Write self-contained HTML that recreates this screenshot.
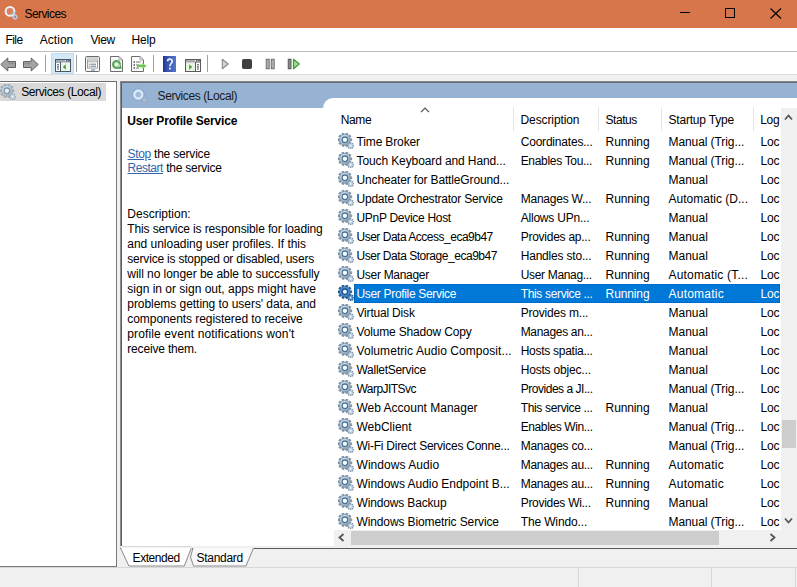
<!DOCTYPE html>
<html><head><meta charset="utf-8"><style>
html,body{margin:0;padding:0;}
body{width:797px;height:587px;position:relative;overflow:hidden;background:#f0f0f0;font-family:"Liberation Sans",sans-serif;}
.t{position:absolute;white-space:nowrap;line-height:20px;}
.b{position:absolute;}
svg{display:block;}
</style></head><body>
<svg width="0" height="0" style="position:absolute;left:0;top:0"><defs><radialGradient id="gg" cx="0.42" cy="0.38" r="0.62"><stop offset="0" stop-color="#eef8fe"/><stop offset="0.55" stop-color="#bcd6ea"/><stop offset="1" stop-color="#8eaac2"/></radialGradient></defs></svg>
<div class="b" style="left:0px;top:0px;width:797px;height:28px;background:#d7764a"></div>
<svg class="b" style="left:2px;top:3px" width="20" height="20" viewBox="0 0 20 20">
<circle cx="8" cy="8.4" r="4.4" fill="#d98262" stroke="#e9f0f8" stroke-width="2"/>
<path d="M10.5 11.5 A4.4 4.4 0 0 0 12.2 9" fill="none" stroke="#a9cde0" stroke-width="2"/>
<circle cx="13" cy="14" r="2.1" fill="#7f9bbf" stroke="#dce6f0" stroke-width="1"/>
</svg>
<div class="t" style="left:24.50px;top:4.44px;font-size:12px;color:#000;letter-spacing:-0.577px;">Services</div>
<div class="b" style="left:680px;top:12px;width:10px;height:1px;background:#000"></div>
<div class="b" style="left:725px;top:8px;width:10px;height:10px;border:1px solid #000;box-sizing:border-box"></div>
<svg class="b" style="left:770px;top:8px" width="12" height="11" viewBox="0 0 12 11"><path d="M0.5 0.5 L11 10.5 M11 0.5 L0.5 10.5" stroke="#000" stroke-width="1.1" fill="none"/></svg>
<div class="b" style="left:0px;top:28px;width:797px;height:23px;background:#fff"></div>
<div class="b" style="left:0px;top:51px;width:797px;height:1px;background:#bdbdbd"></div>
<div class="t" style="left:5.60px;top:29.84px;font-size:12px;color:#000;letter-spacing:-0.609px;">File</div>
<div class="t" style="left:39.80px;top:29.84px;font-size:12px;color:#000;letter-spacing:0.025px;">Action</div>
<div class="t" style="left:90.40px;top:29.84px;font-size:12px;color:#000;letter-spacing:-0.324px;">View</div>
<div class="t" style="left:131.50px;top:29.84px;font-size:12px;color:#000;letter-spacing:-0.145px;">Help</div>
<div class="b" style="left:0px;top:52px;width:797px;height:22px;background:#fff"></div>
<div class="b" style="left:0px;top:74px;width:797px;height:7px;background:#f0f0f0"></div>
<div class="b" style="left:0px;top:74px;width:797px;height:1px;background:#dcdcdc"></div>
<div class="b" style="left:45px;top:55px;width:1px;height:17px;background:#a0a0a0"></div>
<div class="b" style="left:76px;top:55px;width:1px;height:17px;background:#a0a0a0"></div>
<div class="b" style="left:153px;top:55px;width:1px;height:17px;background:#a0a0a0"></div>
<div class="b" style="left:207px;top:55px;width:1px;height:17px;background:#a0a0a0"></div>
<svg class="b" style="left:0px;top:57px" width="40" height="15" viewBox="0 0 40 15">
<path d="M0.8 7.5 L7.8 1 L7.8 4.5 L15.5 4.5 L15.5 10.5 L7.8 10.5 L7.8 14 Z" fill="#a4a4a4" stroke="#616161" stroke-width="1" stroke-linejoin="round"/>
<path d="M38.2 7.5 L31.2 1 L31.2 4.5 L23.5 4.5 L23.5 10.5 L31.2 10.5 L31.2 14 Z" fill="#a4a4a4" stroke="#616161" stroke-width="1" stroke-linejoin="round"/>
<path d="M8.5 6.5 L14.5 6.5 M24.5 6.5 L30.5 6.5" stroke="#8c8c8c" stroke-width="1.5"/>
</svg>
<div class="b" style="left:51px;top:53px;width:23px;height:21px;background:#d5e8f8;border:1px solid #bcdcf4;box-sizing:border-box"></div>
<svg class="b" style="left:55px;top:59px" width="16" height="13" viewBox="0 0 16 13">
<rect x="0.5" y="0.5" width="15" height="12" fill="#fbfdff" stroke="#4b5868"/>
<line x1="1" y1="1.6" x2="10" y2="1.6" stroke="#8a97a6" stroke-width="0.9"/>
<rect x="11" y="1" width="1.6" height="1.4" fill="#4b5868"/><rect x="13.2" y="1" width="1.6" height="1.4" fill="#4b5868"/>
<line x1="0.5" y1="3" x2="15.5" y2="3" stroke="#4b5868"/>
<line x1="5.5" y1="3" x2="5.5" y2="12.5" stroke="#4b5868"/>
<rect x="6" y="3.5" width="9" height="8.5" fill="#eef7ea"/>
<path d="M7.8 8 L10.8 5.3 L10.8 10.7 Z" fill="#4f9a3c"/>
<line x1="2" y1="5.8" x2="4" y2="5.8" stroke="#4b5868" stroke-width="1.1"/><line x1="2" y1="7.9" x2="4" y2="7.9" stroke="#4b5868" stroke-width="1.1"/><line x1="2" y1="10" x2="4" y2="10" stroke="#4b5868" stroke-width="1.1"/>
</svg>
<svg class="b" style="left:85px;top:56px" width="15" height="16" viewBox="0 0 15 16">
<rect x="0.5" y="0.5" width="14" height="15" rx="1" fill="#f7f7f7" stroke="#6a6a6a"/>
<line x1="1.5" y1="2" x2="13.5" y2="2" stroke="#b0b0b0"/>
<rect x="2.5" y="4" width="10" height="8" fill="#fff" stroke="#8a8a8a" stroke-width="0.8"/>
<line x1="2.5" y1="5.8" x2="12.5" y2="5.8" stroke="#9aa"/>
<circle cx="4.3" cy="8.2" r="0.6" fill="#6a7a8a"/><line x1="5.5" y1="8.2" x2="11" y2="8.2" stroke="#6a7a8a"/>
<circle cx="4.3" cy="10.2" r="0.6" fill="#6a7a8a"/><line x1="5.5" y1="10.2" x2="11" y2="10.2" stroke="#6a7a8a"/>
<rect x="6" y="13" width="4" height="1.8" fill="#9cb4cc"/>
</svg>
<svg class="b" style="left:110px;top:56px" width="13" height="16" viewBox="0 0 13 16">
<path d="M0.5 0.5 L9 0.5 L12.5 4 L12.5 15.5 L0.5 15.5 Z" fill="#fafafa" stroke="#6e6e6e"/>
<path d="M9 0.5 L9 4 L12.5 4" fill="none" stroke="#9a9a9a" stroke-width="0.8"/>
<circle cx="6.5" cy="8.5" r="3.4" fill="#e9f6e6" stroke="#5aa55a" stroke-width="2.2"/>
<path d="M9.8 8.5 A3.4 3.4 0 0 1 8.6 11.2" fill="none" stroke="#eaf6e8" stroke-width="1"/>
<path d="M8.2 12.8 L11.6 12.6 L10.8 9.4 Z" fill="#3f8a3f"/>
</svg>
<svg class="b" style="left:131px;top:56px" width="17" height="16" viewBox="0 0 17 16">
<path d="M0.5 0.5 L9 0.5 L12.5 4 L12.5 15.5 L0.5 15.5 Z" fill="#fafafa" stroke="#6e6e6e"/>
<path d="M9 0.5 L9 4 L12.5 4" fill="none" stroke="#9a9a9a" stroke-width="0.8"/>
<circle cx="3.2" cy="6" r="0.8" fill="#222"/><circle cx="3.2" cy="9" r="0.8" fill="#222"/><circle cx="3.2" cy="12" r="0.8" fill="#222"/>
<line x1="5" y1="6" x2="9.5" y2="6" stroke="#777"/><line x1="5" y1="9" x2="8" y2="9" stroke="#777"/><line x1="5" y1="12" x2="8" y2="12" stroke="#777"/>
<path d="M6 8.6 L11.2 8.6 L11.2 6.8 L15.8 9.9 L11.2 13 L11.2 11.2 L6 11.2 Z" fill="#86d46e"/>
<path d="M6.5 9.9 L14.5 9.9" stroke="#58b048" stroke-width="0.9"/>
</svg>
<svg class="b" style="left:163px;top:56px" width="13" height="16" viewBox="0 0 13 16">
<defs><linearGradient id="hg" x1="0" y1="0" x2="1" y2="0"><stop offset="0" stop-color="#1e3488"/><stop offset="0.3" stop-color="#3552b0"/><stop offset="1" stop-color="#5676cc"/></linearGradient></defs>
<rect x="0" y="0" width="13" height="16" fill="url(#hg)"/>
<path d="M4.6 5.2 C4.6 2.6, 9.2 2.4, 9.2 5.2 C9.2 7.4, 6.9 7.6, 6.9 10.2" fill="none" stroke="#eef2ff" stroke-width="1.7"/>
<rect x="6" y="11.6" width="1.8" height="1.9" fill="#eef2ff"/>
</svg>
<svg class="b" style="left:185px;top:59px" width="16" height="13" viewBox="0 0 16 13">
<rect x="0.5" y="0.5" width="15" height="12" fill="#fff" stroke="#5a5a5a"/>
<line x1="1" y1="1.6" x2="10" y2="1.6" stroke="#999" stroke-width="0.9"/>
<rect x="11" y="1" width="1.6" height="1.4" fill="#5a5a5a"/><rect x="13.2" y="1" width="1.6" height="1.4" fill="#5a5a5a"/>
<line x1="0.5" y1="3" x2="15.5" y2="3" stroke="#5a5a5a"/>
<line x1="10.5" y1="3" x2="10.5" y2="12.5" stroke="#5a5a5a"/>
<rect x="1" y="3.5" width="9" height="8.5" fill="#e8f4e2"/>
<path d="M4.2 5.3 L7.2 8 L4.2 10.7 Z" fill="#4f9a3c"/>
<line x1="12" y1="5.8" x2="14" y2="5.8" stroke="#555" stroke-width="1.1"/><line x1="12" y1="7.9" x2="14" y2="7.9" stroke="#555" stroke-width="1.1"/><line x1="12" y1="10" x2="14" y2="10" stroke="#555" stroke-width="1.1"/>
</svg>
<svg class="b" style="left:220px;top:57px" width="82" height="14" viewBox="0 0 82 14">
<path d="M2.3 2.3 L8.3 7 L2.3 11.7 Z" fill="#d4d4d4" stroke="#8a8a8a" stroke-width="1.1" stroke-linejoin="round"/>
<rect x="22" y="2" width="10" height="10" rx="1.8" fill="#404040"/>
<rect x="46.2" y="2.2" width="3" height="9.6" fill="#b0b0b0" stroke="#666" stroke-width="0.9"/>
<rect x="51.2" y="2.2" width="3" height="9.6" fill="#b0b0b0" stroke="#666" stroke-width="0.9"/>
<rect x="68.2" y="2.2" width="2.8" height="9.6" fill="#8a8a8a" stroke="#505050" stroke-width="0.9"/>
<path d="M73.5 2.3 L79.3 7 L73.5 11.7 Z" fill="#9ee08a" stroke="#3a9a32" stroke-width="1.2" stroke-linejoin="round"/>
</svg>
<div class="b" style="left:0px;top:81px;width:117px;height:486px;background:#fff;border-top:1px solid #6e6e6e;border-right:1px solid #7a7a7a;border-bottom:1px solid #7a7a7a;box-sizing:border-box"></div>
<div class="b" style="left:0px;top:83px;width:106px;height:18px;background:#d9d9d9"></div>
<div class="b" style="left:0px;top:84px;width:16px;height:16px;opacity:0.65"><svg width="16" height="16" viewBox="0 0 16 16"><path d="M12.18 5.69 L13.81 5.70 L13.81 7.90 L12.18 7.91 L11.83 9.01 L13.14 9.98 L11.85 11.75 L10.52 10.81 L9.59 11.48 L10.08 13.04 L8.00 13.71 L7.48 12.17 L6.32 12.17 L5.80 13.71 L3.72 13.04 L4.21 11.48 L3.28 10.81 L1.95 11.75 L0.66 9.98 L1.97 9.01 L1.62 7.91 L-0.01 7.90 L-0.01 5.70 L1.62 5.69 L1.97 4.59 L0.66 3.62 L1.95 1.85 L3.28 2.79 L4.21 2.12 L3.72 0.56 L5.80 -0.11 L6.32 1.43 L7.48 1.43 L8.00 -0.11 L10.08 0.56 L9.59 2.12 L10.52 2.79 L11.85 1.85 L13.14 3.62 L11.83 4.59Z" fill="#8196a8" stroke="#74889a" stroke-width="0.5"/><circle cx="6.9" cy="6.8" r="5.0" fill="url(#gg)"/><circle cx="6.9" cy="6.8" r="2.8" fill="none" stroke="#50708e" stroke-width="1.3"/><circle cx="6.9" cy="6.8" r="2.0" fill="#f7fbfe"/><path d="M15.11 12.03 L16.13 12.00 L16.13 13.40 L15.11 13.37 L14.85 14.01 L15.59 14.70 L14.60 15.69 L13.91 14.95 L13.27 15.21 L13.30 16.23 L11.90 16.23 L11.93 15.21 L11.29 14.95 L10.60 15.69 L9.61 14.70 L10.35 14.01 L10.09 13.37 L9.07 13.40 L9.07 12.00 L10.09 12.03 L10.35 11.39 L9.61 10.70 L10.60 9.71 L11.29 10.45 L11.93 10.19 L11.90 9.17 L13.30 9.17 L13.27 10.19 L13.91 10.45 L14.60 9.71 L15.59 10.70 L14.85 11.39Z" fill="#7a8ea0"/><circle cx="12.6" cy="12.7" r="2.4" fill="#bcd5e8"/><circle cx="12.6" cy="12.7" r="0.9" fill="#f4f9fc"/></svg></div>
<div class="t" style="left:21.20px;top:81.84px;font-size:12px;color:#000;letter-spacing:-0.377px;">Services (Local)</div>
<div class="b" style="left:120px;top:81px;width:677px;height:468px;background:#fff;border-top:2px solid #666c72;border-left:2px solid #5c5c5c;box-sizing:border-box"></div>
<div class="b" style="left:120px;top:81px;width:1px;height:465px;background:#8c8c8c"></div>
<div class="b" style="left:120px;top:81px;width:677px;height:1px;background:#80858a"></div>
<div class="b" style="left:122px;top:83px;width:675px;height:25px;background:#96b3d3"></div>
<div class="b" style="left:323px;top:98px;width:474px;height:12px;background:#fff;border-top-left-radius:10px"></div>
<svg class="b" style="left:128px;top:85px" width="22" height="20" viewBox="0 0 22 20">
<circle cx="10.3" cy="9.6" r="6.2" fill="none" stroke="#8eaacb" stroke-width="1.4" stroke-dasharray="1.6 1.2"/>
<circle cx="10.3" cy="9.6" r="4.0" fill="#a3bcd8" stroke="#d9ebf8" stroke-width="2.2"/>
<circle cx="16.8" cy="15" r="2.6" fill="#a5bdd6" stroke="#8ba6c3" stroke-width="1.1" stroke-dasharray="1.2 0.8"/>
</svg>
<div class="t" style="left:157.60px;top:85.54px;font-size:12px;color:#1a1a1a;letter-spacing:-0.414px;">Services (Local)</div>
<div class="t" style="left:127.20px;top:110.84px;font-size:12px;color:#000;font-weight:bold;letter-spacing:-0.170px;">User Profile Service</div>
<div class="t" style="left:127.50px;top:143.84px;font-size:12px;color:#3366aa;letter-spacing:-0.297px;text-decoration:underline;">Stop</div>
<div class="t" style="left:154.00px;top:143.84px;font-size:12px;color:#000;letter-spacing:-0.193px;">the service</div>
<div class="t" style="left:127.50px;top:158.24px;font-size:12px;color:#3366aa;letter-spacing:-0.454px;text-decoration:underline;">Restart</div>
<div class="t" style="left:166.20px;top:158.24px;font-size:12px;color:#000;letter-spacing:-0.230px;">the service</div>
<div class="t" style="left:127.30px;top:203.54px;font-size:12px;color:#000;">Description:</div>
<div class="t" style="left:127.30px;top:218.54px;font-size:12px;color:#000;letter-spacing:-0.123px;">This service is responsible for loading</div>
<div class="t" style="left:127.30px;top:233.54px;font-size:12px;color:#000;letter-spacing:-0.021px;">and unloading user profiles. If this</div>
<div class="t" style="left:127.30px;top:248.54px;font-size:12px;color:#000;letter-spacing:-0.200px;">service is stopped or disabled, users</div>
<div class="t" style="left:127.30px;top:263.54px;font-size:12px;color:#000;letter-spacing:-0.048px;">will no longer be able to successfully</div>
<div class="t" style="left:127.30px;top:278.54px;font-size:12px;color:#000;letter-spacing:-0.002px;">sign in or sign out, apps might have</div>
<div class="t" style="left:127.30px;top:293.54px;font-size:12px;color:#000;letter-spacing:-0.048px;">problems getting to users' data, and</div>
<div class="t" style="left:127.30px;top:308.54px;font-size:12px;color:#000;letter-spacing:-0.064px;">components registered to receive</div>
<div class="t" style="left:127.30px;top:323.54px;font-size:12px;color:#000;letter-spacing:0.126px;">profile event notifications won't</div>
<div class="t" style="left:127.30px;top:338.54px;font-size:12px;color:#000;letter-spacing:-0.179px;">receive them.</div>
<div class="t" style="left:340.70px;top:109.84px;font-size:12px;color:#000;letter-spacing:-0.328px;">Name</div>
<svg class="b" style="left:420px;top:107px" width="10" height="6" viewBox="0 0 10 6"><path d="M1 5.2 L5 1.2 L9 5.2" fill="none" stroke="#505050" stroke-width="1.2"/></svg>
<div class="b" style="left:513px;top:107px;width:1px;height:24px;background:#e5e5e5"></div>
<div class="b" style="left:598px;top:107px;width:1px;height:24px;background:#e5e5e5"></div>
<div class="b" style="left:661px;top:107px;width:1px;height:24px;background:#e5e5e5"></div>
<div class="b" style="left:753px;top:107px;width:1px;height:24px;background:#e5e5e5"></div>
<div class="t" style="left:520.50px;top:109.84px;font-size:12px;color:#000;letter-spacing:-0.102px;">Description</div>
<div class="t" style="left:605.50px;top:109.84px;font-size:12px;color:#000;letter-spacing:-0.453px;">Status</div>
<div class="t" style="left:668.50px;top:109.84px;font-size:12px;color:#000;letter-spacing:-0.194px;">Startup Type</div>
<div class="t" style="left:760.20px;top:109.84px;font-size:12px;color:#000;letter-spacing:-0.241px;">Log</div>
<div class="b" style="left:338px;top:133px;width:16px;height:16px"><svg width="16" height="16" viewBox="0 0 16 16"><path d="M12.18 5.69 L13.81 5.70 L13.81 7.90 L12.18 7.91 L11.83 9.01 L13.14 9.98 L11.85 11.75 L10.52 10.81 L9.59 11.48 L10.08 13.04 L8.00 13.71 L7.48 12.17 L6.32 12.17 L5.80 13.71 L3.72 13.04 L4.21 11.48 L3.28 10.81 L1.95 11.75 L0.66 9.98 L1.97 9.01 L1.62 7.91 L-0.01 7.90 L-0.01 5.70 L1.62 5.69 L1.97 4.59 L0.66 3.62 L1.95 1.85 L3.28 2.79 L4.21 2.12 L3.72 0.56 L5.80 -0.11 L6.32 1.43 L7.48 1.43 L8.00 -0.11 L10.08 0.56 L9.59 2.12 L10.52 2.79 L11.85 1.85 L13.14 3.62 L11.83 4.59Z" fill="#8196a8" stroke="#74889a" stroke-width="0.5"/><circle cx="6.9" cy="6.8" r="5.0" fill="url(#gg)"/><circle cx="6.9" cy="6.8" r="2.8" fill="none" stroke="#50708e" stroke-width="1.3"/><circle cx="6.9" cy="6.8" r="2.0" fill="#f7fbfe"/><path d="M15.11 12.03 L16.13 12.00 L16.13 13.40 L15.11 13.37 L14.85 14.01 L15.59 14.70 L14.60 15.69 L13.91 14.95 L13.27 15.21 L13.30 16.23 L11.90 16.23 L11.93 15.21 L11.29 14.95 L10.60 15.69 L9.61 14.70 L10.35 14.01 L10.09 13.37 L9.07 13.40 L9.07 12.00 L10.09 12.03 L10.35 11.39 L9.61 10.70 L10.60 9.71 L11.29 10.45 L11.93 10.19 L11.90 9.17 L13.30 9.17 L13.27 10.19 L13.91 10.45 L14.60 9.71 L15.59 10.70 L14.85 11.39Z" fill="#7a8ea0"/><circle cx="12.6" cy="12.7" r="2.4" fill="#bcd5e8"/><circle cx="12.6" cy="12.7" r="0.9" fill="#f4f9fc"/></svg></div>
<div class="t" style="left:356.50px;top:131.84px;font-size:12px;color:#000;letter-spacing:-0.136px;">Time Broker</div>
<div class="t" style="left:520.70px;top:131.84px;font-size:12px;color:#000;letter-spacing:-0.201px;">Coordinates...</div>
<div class="t" style="left:605.60px;top:131.84px;font-size:12px;color:#000;letter-spacing:-0.115px;">Running</div>
<div class="t" style="left:668.50px;top:131.84px;font-size:12px;color:#000;letter-spacing:-0.081px;">Manual (Trig...</div>
<div class="t" style="left:760.50px;top:131.84px;font-size:12px;color:#000;letter-spacing:-0.2px;">Loc</div>
<div class="b" style="left:338px;top:152px;width:16px;height:16px"><svg width="16" height="16" viewBox="0 0 16 16"><path d="M12.18 5.69 L13.81 5.70 L13.81 7.90 L12.18 7.91 L11.83 9.01 L13.14 9.98 L11.85 11.75 L10.52 10.81 L9.59 11.48 L10.08 13.04 L8.00 13.71 L7.48 12.17 L6.32 12.17 L5.80 13.71 L3.72 13.04 L4.21 11.48 L3.28 10.81 L1.95 11.75 L0.66 9.98 L1.97 9.01 L1.62 7.91 L-0.01 7.90 L-0.01 5.70 L1.62 5.69 L1.97 4.59 L0.66 3.62 L1.95 1.85 L3.28 2.79 L4.21 2.12 L3.72 0.56 L5.80 -0.11 L6.32 1.43 L7.48 1.43 L8.00 -0.11 L10.08 0.56 L9.59 2.12 L10.52 2.79 L11.85 1.85 L13.14 3.62 L11.83 4.59Z" fill="#8196a8" stroke="#74889a" stroke-width="0.5"/><circle cx="6.9" cy="6.8" r="5.0" fill="url(#gg)"/><circle cx="6.9" cy="6.8" r="2.8" fill="none" stroke="#50708e" stroke-width="1.3"/><circle cx="6.9" cy="6.8" r="2.0" fill="#f7fbfe"/><path d="M15.11 12.03 L16.13 12.00 L16.13 13.40 L15.11 13.37 L14.85 14.01 L15.59 14.70 L14.60 15.69 L13.91 14.95 L13.27 15.21 L13.30 16.23 L11.90 16.23 L11.93 15.21 L11.29 14.95 L10.60 15.69 L9.61 14.70 L10.35 14.01 L10.09 13.37 L9.07 13.40 L9.07 12.00 L10.09 12.03 L10.35 11.39 L9.61 10.70 L10.60 9.71 L11.29 10.45 L11.93 10.19 L11.90 9.17 L13.30 9.17 L13.27 10.19 L13.91 10.45 L14.60 9.71 L15.59 10.70 L14.85 11.39Z" fill="#7a8ea0"/><circle cx="12.6" cy="12.7" r="2.4" fill="#bcd5e8"/><circle cx="12.6" cy="12.7" r="0.9" fill="#f4f9fc"/></svg></div>
<div class="t" style="left:356.50px;top:150.84px;font-size:12px;color:#000;letter-spacing:-0.108px;">Touch Keyboard and Hand...</div>
<div class="t" style="left:520.70px;top:150.84px;font-size:12px;color:#000;letter-spacing:-0.317px;">Enables Tou...</div>
<div class="t" style="left:605.60px;top:150.84px;font-size:12px;color:#000;letter-spacing:-0.115px;">Running</div>
<div class="t" style="left:668.50px;top:150.84px;font-size:12px;color:#000;letter-spacing:-0.081px;">Manual (Trig...</div>
<div class="t" style="left:760.50px;top:150.84px;font-size:12px;color:#000;letter-spacing:-0.2px;">Loc</div>
<div class="b" style="left:338px;top:171px;width:16px;height:16px"><svg width="16" height="16" viewBox="0 0 16 16"><path d="M12.18 5.69 L13.81 5.70 L13.81 7.90 L12.18 7.91 L11.83 9.01 L13.14 9.98 L11.85 11.75 L10.52 10.81 L9.59 11.48 L10.08 13.04 L8.00 13.71 L7.48 12.17 L6.32 12.17 L5.80 13.71 L3.72 13.04 L4.21 11.48 L3.28 10.81 L1.95 11.75 L0.66 9.98 L1.97 9.01 L1.62 7.91 L-0.01 7.90 L-0.01 5.70 L1.62 5.69 L1.97 4.59 L0.66 3.62 L1.95 1.85 L3.28 2.79 L4.21 2.12 L3.72 0.56 L5.80 -0.11 L6.32 1.43 L7.48 1.43 L8.00 -0.11 L10.08 0.56 L9.59 2.12 L10.52 2.79 L11.85 1.85 L13.14 3.62 L11.83 4.59Z" fill="#8196a8" stroke="#74889a" stroke-width="0.5"/><circle cx="6.9" cy="6.8" r="5.0" fill="url(#gg)"/><circle cx="6.9" cy="6.8" r="2.8" fill="none" stroke="#50708e" stroke-width="1.3"/><circle cx="6.9" cy="6.8" r="2.0" fill="#f7fbfe"/><path d="M15.11 12.03 L16.13 12.00 L16.13 13.40 L15.11 13.37 L14.85 14.01 L15.59 14.70 L14.60 15.69 L13.91 14.95 L13.27 15.21 L13.30 16.23 L11.90 16.23 L11.93 15.21 L11.29 14.95 L10.60 15.69 L9.61 14.70 L10.35 14.01 L10.09 13.37 L9.07 13.40 L9.07 12.00 L10.09 12.03 L10.35 11.39 L9.61 10.70 L10.60 9.71 L11.29 10.45 L11.93 10.19 L11.90 9.17 L13.30 9.17 L13.27 10.19 L13.91 10.45 L14.60 9.71 L15.59 10.70 L14.85 11.39Z" fill="#7a8ea0"/><circle cx="12.6" cy="12.7" r="2.4" fill="#bcd5e8"/><circle cx="12.6" cy="12.7" r="0.9" fill="#f4f9fc"/></svg></div>
<div class="t" style="left:356.50px;top:169.84px;font-size:12px;color:#000;letter-spacing:-0.143px;">Uncheater for BattleGround...</div>
<div class="t" style="left:668.50px;top:169.84px;font-size:12px;color:#000;letter-spacing:0.007px;">Manual</div>
<div class="t" style="left:760.50px;top:169.84px;font-size:12px;color:#000;letter-spacing:-0.2px;">Loc</div>
<div class="b" style="left:338px;top:190px;width:16px;height:16px"><svg width="16" height="16" viewBox="0 0 16 16"><path d="M12.18 5.69 L13.81 5.70 L13.81 7.90 L12.18 7.91 L11.83 9.01 L13.14 9.98 L11.85 11.75 L10.52 10.81 L9.59 11.48 L10.08 13.04 L8.00 13.71 L7.48 12.17 L6.32 12.17 L5.80 13.71 L3.72 13.04 L4.21 11.48 L3.28 10.81 L1.95 11.75 L0.66 9.98 L1.97 9.01 L1.62 7.91 L-0.01 7.90 L-0.01 5.70 L1.62 5.69 L1.97 4.59 L0.66 3.62 L1.95 1.85 L3.28 2.79 L4.21 2.12 L3.72 0.56 L5.80 -0.11 L6.32 1.43 L7.48 1.43 L8.00 -0.11 L10.08 0.56 L9.59 2.12 L10.52 2.79 L11.85 1.85 L13.14 3.62 L11.83 4.59Z" fill="#8196a8" stroke="#74889a" stroke-width="0.5"/><circle cx="6.9" cy="6.8" r="5.0" fill="url(#gg)"/><circle cx="6.9" cy="6.8" r="2.8" fill="none" stroke="#50708e" stroke-width="1.3"/><circle cx="6.9" cy="6.8" r="2.0" fill="#f7fbfe"/><path d="M15.11 12.03 L16.13 12.00 L16.13 13.40 L15.11 13.37 L14.85 14.01 L15.59 14.70 L14.60 15.69 L13.91 14.95 L13.27 15.21 L13.30 16.23 L11.90 16.23 L11.93 15.21 L11.29 14.95 L10.60 15.69 L9.61 14.70 L10.35 14.01 L10.09 13.37 L9.07 13.40 L9.07 12.00 L10.09 12.03 L10.35 11.39 L9.61 10.70 L10.60 9.71 L11.29 10.45 L11.93 10.19 L11.90 9.17 L13.30 9.17 L13.27 10.19 L13.91 10.45 L14.60 9.71 L15.59 10.70 L14.85 11.39Z" fill="#7a8ea0"/><circle cx="12.6" cy="12.7" r="2.4" fill="#bcd5e8"/><circle cx="12.6" cy="12.7" r="0.9" fill="#f4f9fc"/></svg></div>
<div class="t" style="left:356.50px;top:188.84px;font-size:12px;color:#000;letter-spacing:-0.217px;">Update Orchestrator Service</div>
<div class="t" style="left:520.70px;top:188.84px;font-size:12px;color:#000;letter-spacing:-0.230px;">Manages W...</div>
<div class="t" style="left:605.60px;top:188.84px;font-size:12px;color:#000;letter-spacing:-0.115px;">Running</div>
<div class="t" style="left:668.50px;top:188.84px;font-size:12px;color:#000;letter-spacing:0.010px;">Automatic (D...</div>
<div class="t" style="left:760.50px;top:188.84px;font-size:12px;color:#000;letter-spacing:-0.2px;">Loc</div>
<div class="b" style="left:338px;top:209px;width:16px;height:16px"><svg width="16" height="16" viewBox="0 0 16 16"><path d="M12.18 5.69 L13.81 5.70 L13.81 7.90 L12.18 7.91 L11.83 9.01 L13.14 9.98 L11.85 11.75 L10.52 10.81 L9.59 11.48 L10.08 13.04 L8.00 13.71 L7.48 12.17 L6.32 12.17 L5.80 13.71 L3.72 13.04 L4.21 11.48 L3.28 10.81 L1.95 11.75 L0.66 9.98 L1.97 9.01 L1.62 7.91 L-0.01 7.90 L-0.01 5.70 L1.62 5.69 L1.97 4.59 L0.66 3.62 L1.95 1.85 L3.28 2.79 L4.21 2.12 L3.72 0.56 L5.80 -0.11 L6.32 1.43 L7.48 1.43 L8.00 -0.11 L10.08 0.56 L9.59 2.12 L10.52 2.79 L11.85 1.85 L13.14 3.62 L11.83 4.59Z" fill="#8196a8" stroke="#74889a" stroke-width="0.5"/><circle cx="6.9" cy="6.8" r="5.0" fill="url(#gg)"/><circle cx="6.9" cy="6.8" r="2.8" fill="none" stroke="#50708e" stroke-width="1.3"/><circle cx="6.9" cy="6.8" r="2.0" fill="#f7fbfe"/><path d="M15.11 12.03 L16.13 12.00 L16.13 13.40 L15.11 13.37 L14.85 14.01 L15.59 14.70 L14.60 15.69 L13.91 14.95 L13.27 15.21 L13.30 16.23 L11.90 16.23 L11.93 15.21 L11.29 14.95 L10.60 15.69 L9.61 14.70 L10.35 14.01 L10.09 13.37 L9.07 13.40 L9.07 12.00 L10.09 12.03 L10.35 11.39 L9.61 10.70 L10.60 9.71 L11.29 10.45 L11.93 10.19 L11.90 9.17 L13.30 9.17 L13.27 10.19 L13.91 10.45 L14.60 9.71 L15.59 10.70 L14.85 11.39Z" fill="#7a8ea0"/><circle cx="12.6" cy="12.7" r="2.4" fill="#bcd5e8"/><circle cx="12.6" cy="12.7" r="0.9" fill="#f4f9fc"/></svg></div>
<div class="t" style="left:356.50px;top:207.84px;font-size:12px;color:#000;letter-spacing:-0.297px;">UPnP Device Host</div>
<div class="t" style="left:520.70px;top:207.84px;font-size:12px;color:#000;letter-spacing:-0.212px;">Allows UPn...</div>
<div class="t" style="left:668.50px;top:207.84px;font-size:12px;color:#000;letter-spacing:0.007px;">Manual</div>
<div class="t" style="left:760.50px;top:207.84px;font-size:12px;color:#000;letter-spacing:-0.2px;">Loc</div>
<div class="b" style="left:338px;top:228px;width:16px;height:16px"><svg width="16" height="16" viewBox="0 0 16 16"><path d="M12.18 5.69 L13.81 5.70 L13.81 7.90 L12.18 7.91 L11.83 9.01 L13.14 9.98 L11.85 11.75 L10.52 10.81 L9.59 11.48 L10.08 13.04 L8.00 13.71 L7.48 12.17 L6.32 12.17 L5.80 13.71 L3.72 13.04 L4.21 11.48 L3.28 10.81 L1.95 11.75 L0.66 9.98 L1.97 9.01 L1.62 7.91 L-0.01 7.90 L-0.01 5.70 L1.62 5.69 L1.97 4.59 L0.66 3.62 L1.95 1.85 L3.28 2.79 L4.21 2.12 L3.72 0.56 L5.80 -0.11 L6.32 1.43 L7.48 1.43 L8.00 -0.11 L10.08 0.56 L9.59 2.12 L10.52 2.79 L11.85 1.85 L13.14 3.62 L11.83 4.59Z" fill="#8196a8" stroke="#74889a" stroke-width="0.5"/><circle cx="6.9" cy="6.8" r="5.0" fill="url(#gg)"/><circle cx="6.9" cy="6.8" r="2.8" fill="none" stroke="#50708e" stroke-width="1.3"/><circle cx="6.9" cy="6.8" r="2.0" fill="#f7fbfe"/><path d="M15.11 12.03 L16.13 12.00 L16.13 13.40 L15.11 13.37 L14.85 14.01 L15.59 14.70 L14.60 15.69 L13.91 14.95 L13.27 15.21 L13.30 16.23 L11.90 16.23 L11.93 15.21 L11.29 14.95 L10.60 15.69 L9.61 14.70 L10.35 14.01 L10.09 13.37 L9.07 13.40 L9.07 12.00 L10.09 12.03 L10.35 11.39 L9.61 10.70 L10.60 9.71 L11.29 10.45 L11.93 10.19 L11.90 9.17 L13.30 9.17 L13.27 10.19 L13.91 10.45 L14.60 9.71 L15.59 10.70 L14.85 11.39Z" fill="#7a8ea0"/><circle cx="12.6" cy="12.7" r="2.4" fill="#bcd5e8"/><circle cx="12.6" cy="12.7" r="0.9" fill="#f4f9fc"/></svg></div>
<div class="t" style="left:356.50px;top:226.84px;font-size:12px;color:#000;letter-spacing:-0.491px;">User Data Access_eca9b47</div>
<div class="t" style="left:520.70px;top:226.84px;font-size:12px;color:#000;letter-spacing:-0.255px;">Provides ap...</div>
<div class="t" style="left:605.60px;top:226.84px;font-size:12px;color:#000;letter-spacing:-0.115px;">Running</div>
<div class="t" style="left:668.50px;top:226.84px;font-size:12px;color:#000;letter-spacing:0.007px;">Manual</div>
<div class="t" style="left:760.50px;top:226.84px;font-size:12px;color:#000;letter-spacing:-0.2px;">Loc</div>
<div class="b" style="left:338px;top:247px;width:16px;height:16px"><svg width="16" height="16" viewBox="0 0 16 16"><path d="M12.18 5.69 L13.81 5.70 L13.81 7.90 L12.18 7.91 L11.83 9.01 L13.14 9.98 L11.85 11.75 L10.52 10.81 L9.59 11.48 L10.08 13.04 L8.00 13.71 L7.48 12.17 L6.32 12.17 L5.80 13.71 L3.72 13.04 L4.21 11.48 L3.28 10.81 L1.95 11.75 L0.66 9.98 L1.97 9.01 L1.62 7.91 L-0.01 7.90 L-0.01 5.70 L1.62 5.69 L1.97 4.59 L0.66 3.62 L1.95 1.85 L3.28 2.79 L4.21 2.12 L3.72 0.56 L5.80 -0.11 L6.32 1.43 L7.48 1.43 L8.00 -0.11 L10.08 0.56 L9.59 2.12 L10.52 2.79 L11.85 1.85 L13.14 3.62 L11.83 4.59Z" fill="#8196a8" stroke="#74889a" stroke-width="0.5"/><circle cx="6.9" cy="6.8" r="5.0" fill="url(#gg)"/><circle cx="6.9" cy="6.8" r="2.8" fill="none" stroke="#50708e" stroke-width="1.3"/><circle cx="6.9" cy="6.8" r="2.0" fill="#f7fbfe"/><path d="M15.11 12.03 L16.13 12.00 L16.13 13.40 L15.11 13.37 L14.85 14.01 L15.59 14.70 L14.60 15.69 L13.91 14.95 L13.27 15.21 L13.30 16.23 L11.90 16.23 L11.93 15.21 L11.29 14.95 L10.60 15.69 L9.61 14.70 L10.35 14.01 L10.09 13.37 L9.07 13.40 L9.07 12.00 L10.09 12.03 L10.35 11.39 L9.61 10.70 L10.60 9.71 L11.29 10.45 L11.93 10.19 L11.90 9.17 L13.30 9.17 L13.27 10.19 L13.91 10.45 L14.60 9.71 L15.59 10.70 L14.85 11.39Z" fill="#7a8ea0"/><circle cx="12.6" cy="12.7" r="2.4" fill="#bcd5e8"/><circle cx="12.6" cy="12.7" r="0.9" fill="#f4f9fc"/></svg></div>
<div class="t" style="left:356.50px;top:245.84px;font-size:12px;color:#000;letter-spacing:-0.464px;">User Data Storage_eca9b47</div>
<div class="t" style="left:520.70px;top:245.84px;font-size:12px;color:#000;letter-spacing:-0.198px;">Handles sto...</div>
<div class="t" style="left:605.60px;top:245.84px;font-size:12px;color:#000;letter-spacing:-0.115px;">Running</div>
<div class="t" style="left:668.50px;top:245.84px;font-size:12px;color:#000;letter-spacing:0.007px;">Manual</div>
<div class="t" style="left:760.50px;top:245.84px;font-size:12px;color:#000;letter-spacing:-0.2px;">Loc</div>
<div class="b" style="left:338px;top:266px;width:16px;height:16px"><svg width="16" height="16" viewBox="0 0 16 16"><path d="M12.18 5.69 L13.81 5.70 L13.81 7.90 L12.18 7.91 L11.83 9.01 L13.14 9.98 L11.85 11.75 L10.52 10.81 L9.59 11.48 L10.08 13.04 L8.00 13.71 L7.48 12.17 L6.32 12.17 L5.80 13.71 L3.72 13.04 L4.21 11.48 L3.28 10.81 L1.95 11.75 L0.66 9.98 L1.97 9.01 L1.62 7.91 L-0.01 7.90 L-0.01 5.70 L1.62 5.69 L1.97 4.59 L0.66 3.62 L1.95 1.85 L3.28 2.79 L4.21 2.12 L3.72 0.56 L5.80 -0.11 L6.32 1.43 L7.48 1.43 L8.00 -0.11 L10.08 0.56 L9.59 2.12 L10.52 2.79 L11.85 1.85 L13.14 3.62 L11.83 4.59Z" fill="#8196a8" stroke="#74889a" stroke-width="0.5"/><circle cx="6.9" cy="6.8" r="5.0" fill="url(#gg)"/><circle cx="6.9" cy="6.8" r="2.8" fill="none" stroke="#50708e" stroke-width="1.3"/><circle cx="6.9" cy="6.8" r="2.0" fill="#f7fbfe"/><path d="M15.11 12.03 L16.13 12.00 L16.13 13.40 L15.11 13.37 L14.85 14.01 L15.59 14.70 L14.60 15.69 L13.91 14.95 L13.27 15.21 L13.30 16.23 L11.90 16.23 L11.93 15.21 L11.29 14.95 L10.60 15.69 L9.61 14.70 L10.35 14.01 L10.09 13.37 L9.07 13.40 L9.07 12.00 L10.09 12.03 L10.35 11.39 L9.61 10.70 L10.60 9.71 L11.29 10.45 L11.93 10.19 L11.90 9.17 L13.30 9.17 L13.27 10.19 L13.91 10.45 L14.60 9.71 L15.59 10.70 L14.85 11.39Z" fill="#7a8ea0"/><circle cx="12.6" cy="12.7" r="2.4" fill="#bcd5e8"/><circle cx="12.6" cy="12.7" r="0.9" fill="#f4f9fc"/></svg></div>
<div class="t" style="left:356.50px;top:264.84px;font-size:12px;color:#000;letter-spacing:-0.303px;">User Manager</div>
<div class="t" style="left:520.70px;top:264.84px;font-size:12px;color:#000;letter-spacing:-0.328px;">User Manag...</div>
<div class="t" style="left:605.60px;top:264.84px;font-size:12px;color:#000;letter-spacing:-0.115px;">Running</div>
<div class="t" style="left:668.50px;top:264.84px;font-size:12px;color:#000;letter-spacing:0.187px;">Automatic (T...</div>
<div class="t" style="left:760.50px;top:264.84px;font-size:12px;color:#000;letter-spacing:-0.2px;">Loc</div>
<div class="b" style="left:354px;top:284px;width:426px;height:19px;background:#0078d7;border:1px dotted #1a4f8a;box-sizing:border-box"></div>
<div class="b" style="left:338px;top:285px;width:16px;height:16px"><svg width="16" height="16" viewBox="0 0 16 16"><path d="M12.18 5.69 L13.81 5.70 L13.81 7.90 L12.18 7.91 L11.83 9.01 L13.14 9.98 L11.85 11.75 L10.52 10.81 L9.59 11.48 L10.08 13.04 L8.00 13.71 L7.48 12.17 L6.32 12.17 L5.80 13.71 L3.72 13.04 L4.21 11.48 L3.28 10.81 L1.95 11.75 L0.66 9.98 L1.97 9.01 L1.62 7.91 L-0.01 7.90 L-0.01 5.70 L1.62 5.69 L1.97 4.59 L0.66 3.62 L1.95 1.85 L3.28 2.79 L4.21 2.12 L3.72 0.56 L5.80 -0.11 L6.32 1.43 L7.48 1.43 L8.00 -0.11 L10.08 0.56 L9.59 2.12 L10.52 2.79 L11.85 1.85 L13.14 3.62 L11.83 4.59Z" fill="#2a5a90" stroke="#24507f" stroke-width="0.5"/><circle cx="6.9" cy="6.8" r="5.0" fill="#4f90d0"/><circle cx="6.9" cy="6.8" r="2.8" fill="none" stroke="#1f4f86" stroke-width="1.3"/><circle cx="6.9" cy="6.8" r="2.0" fill="#e4f2fc"/><path d="M15.11 12.03 L16.13 12.00 L16.13 13.40 L15.11 13.37 L14.85 14.01 L15.59 14.70 L14.60 15.69 L13.91 14.95 L13.27 15.21 L13.30 16.23 L11.90 16.23 L11.93 15.21 L11.29 14.95 L10.60 15.69 L9.61 14.70 L10.35 14.01 L10.09 13.37 L9.07 13.40 L9.07 12.00 L10.09 12.03 L10.35 11.39 L9.61 10.70 L10.60 9.71 L11.29 10.45 L11.93 10.19 L11.90 9.17 L13.30 9.17 L13.27 10.19 L13.91 10.45 L14.60 9.71 L15.59 10.70 L14.85 11.39Z" fill="#24507f"/><circle cx="12.6" cy="12.7" r="2.4" fill="#5a98d4"/><circle cx="12.6" cy="12.7" r="0.9" fill="#d0e6f8"/></svg></div>
<div class="t" style="left:356.50px;top:283.84px;font-size:12px;color:#fff;letter-spacing:-0.322px;">User Profile Service</div>
<div class="t" style="left:520.70px;top:283.84px;font-size:12px;color:#fff;letter-spacing:-0.341px;">This service ...</div>
<div class="t" style="left:605.60px;top:283.84px;font-size:12px;color:#fff;letter-spacing:-0.115px;">Running</div>
<div class="t" style="left:668.50px;top:283.84px;font-size:12px;color:#fff;letter-spacing:0.227px;">Automatic</div>
<div class="t" style="left:760.50px;top:283.84px;font-size:12px;color:#fff;letter-spacing:-0.2px;">Loc</div>
<div class="b" style="left:338px;top:304px;width:16px;height:16px"><svg width="16" height="16" viewBox="0 0 16 16"><path d="M12.18 5.69 L13.81 5.70 L13.81 7.90 L12.18 7.91 L11.83 9.01 L13.14 9.98 L11.85 11.75 L10.52 10.81 L9.59 11.48 L10.08 13.04 L8.00 13.71 L7.48 12.17 L6.32 12.17 L5.80 13.71 L3.72 13.04 L4.21 11.48 L3.28 10.81 L1.95 11.75 L0.66 9.98 L1.97 9.01 L1.62 7.91 L-0.01 7.90 L-0.01 5.70 L1.62 5.69 L1.97 4.59 L0.66 3.62 L1.95 1.85 L3.28 2.79 L4.21 2.12 L3.72 0.56 L5.80 -0.11 L6.32 1.43 L7.48 1.43 L8.00 -0.11 L10.08 0.56 L9.59 2.12 L10.52 2.79 L11.85 1.85 L13.14 3.62 L11.83 4.59Z" fill="#8196a8" stroke="#74889a" stroke-width="0.5"/><circle cx="6.9" cy="6.8" r="5.0" fill="url(#gg)"/><circle cx="6.9" cy="6.8" r="2.8" fill="none" stroke="#50708e" stroke-width="1.3"/><circle cx="6.9" cy="6.8" r="2.0" fill="#f7fbfe"/><path d="M15.11 12.03 L16.13 12.00 L16.13 13.40 L15.11 13.37 L14.85 14.01 L15.59 14.70 L14.60 15.69 L13.91 14.95 L13.27 15.21 L13.30 16.23 L11.90 16.23 L11.93 15.21 L11.29 14.95 L10.60 15.69 L9.61 14.70 L10.35 14.01 L10.09 13.37 L9.07 13.40 L9.07 12.00 L10.09 12.03 L10.35 11.39 L9.61 10.70 L10.60 9.71 L11.29 10.45 L11.93 10.19 L11.90 9.17 L13.30 9.17 L13.27 10.19 L13.91 10.45 L14.60 9.71 L15.59 10.70 L14.85 11.39Z" fill="#7a8ea0"/><circle cx="12.6" cy="12.7" r="2.4" fill="#bcd5e8"/><circle cx="12.6" cy="12.7" r="0.9" fill="#f4f9fc"/></svg></div>
<div class="t" style="left:356.50px;top:302.84px;font-size:12px;color:#000;letter-spacing:-0.189px;">Virtual Disk</div>
<div class="t" style="left:520.70px;top:302.84px;font-size:12px;color:#000;letter-spacing:-0.194px;">Provides m...</div>
<div class="t" style="left:668.50px;top:302.84px;font-size:12px;color:#000;letter-spacing:0.007px;">Manual</div>
<div class="t" style="left:760.50px;top:302.84px;font-size:12px;color:#000;letter-spacing:-0.2px;">Loc</div>
<div class="b" style="left:338px;top:323px;width:16px;height:16px"><svg width="16" height="16" viewBox="0 0 16 16"><path d="M12.18 5.69 L13.81 5.70 L13.81 7.90 L12.18 7.91 L11.83 9.01 L13.14 9.98 L11.85 11.75 L10.52 10.81 L9.59 11.48 L10.08 13.04 L8.00 13.71 L7.48 12.17 L6.32 12.17 L5.80 13.71 L3.72 13.04 L4.21 11.48 L3.28 10.81 L1.95 11.75 L0.66 9.98 L1.97 9.01 L1.62 7.91 L-0.01 7.90 L-0.01 5.70 L1.62 5.69 L1.97 4.59 L0.66 3.62 L1.95 1.85 L3.28 2.79 L4.21 2.12 L3.72 0.56 L5.80 -0.11 L6.32 1.43 L7.48 1.43 L8.00 -0.11 L10.08 0.56 L9.59 2.12 L10.52 2.79 L11.85 1.85 L13.14 3.62 L11.83 4.59Z" fill="#8196a8" stroke="#74889a" stroke-width="0.5"/><circle cx="6.9" cy="6.8" r="5.0" fill="url(#gg)"/><circle cx="6.9" cy="6.8" r="2.8" fill="none" stroke="#50708e" stroke-width="1.3"/><circle cx="6.9" cy="6.8" r="2.0" fill="#f7fbfe"/><path d="M15.11 12.03 L16.13 12.00 L16.13 13.40 L15.11 13.37 L14.85 14.01 L15.59 14.70 L14.60 15.69 L13.91 14.95 L13.27 15.21 L13.30 16.23 L11.90 16.23 L11.93 15.21 L11.29 14.95 L10.60 15.69 L9.61 14.70 L10.35 14.01 L10.09 13.37 L9.07 13.40 L9.07 12.00 L10.09 12.03 L10.35 11.39 L9.61 10.70 L10.60 9.71 L11.29 10.45 L11.93 10.19 L11.90 9.17 L13.30 9.17 L13.27 10.19 L13.91 10.45 L14.60 9.71 L15.59 10.70 L14.85 11.39Z" fill="#7a8ea0"/><circle cx="12.6" cy="12.7" r="2.4" fill="#bcd5e8"/><circle cx="12.6" cy="12.7" r="0.9" fill="#f4f9fc"/></svg></div>
<div class="t" style="left:356.50px;top:321.84px;font-size:12px;color:#000;letter-spacing:-0.165px;">Volume Shadow Copy</div>
<div class="t" style="left:520.70px;top:321.84px;font-size:12px;color:#000;letter-spacing:-0.319px;">Manages an...</div>
<div class="t" style="left:668.50px;top:321.84px;font-size:12px;color:#000;letter-spacing:0.007px;">Manual</div>
<div class="t" style="left:760.50px;top:321.84px;font-size:12px;color:#000;letter-spacing:-0.2px;">Loc</div>
<div class="b" style="left:338px;top:342px;width:16px;height:16px"><svg width="16" height="16" viewBox="0 0 16 16"><path d="M12.18 5.69 L13.81 5.70 L13.81 7.90 L12.18 7.91 L11.83 9.01 L13.14 9.98 L11.85 11.75 L10.52 10.81 L9.59 11.48 L10.08 13.04 L8.00 13.71 L7.48 12.17 L6.32 12.17 L5.80 13.71 L3.72 13.04 L4.21 11.48 L3.28 10.81 L1.95 11.75 L0.66 9.98 L1.97 9.01 L1.62 7.91 L-0.01 7.90 L-0.01 5.70 L1.62 5.69 L1.97 4.59 L0.66 3.62 L1.95 1.85 L3.28 2.79 L4.21 2.12 L3.72 0.56 L5.80 -0.11 L6.32 1.43 L7.48 1.43 L8.00 -0.11 L10.08 0.56 L9.59 2.12 L10.52 2.79 L11.85 1.85 L13.14 3.62 L11.83 4.59Z" fill="#8196a8" stroke="#74889a" stroke-width="0.5"/><circle cx="6.9" cy="6.8" r="5.0" fill="url(#gg)"/><circle cx="6.9" cy="6.8" r="2.8" fill="none" stroke="#50708e" stroke-width="1.3"/><circle cx="6.9" cy="6.8" r="2.0" fill="#f7fbfe"/><path d="M15.11 12.03 L16.13 12.00 L16.13 13.40 L15.11 13.37 L14.85 14.01 L15.59 14.70 L14.60 15.69 L13.91 14.95 L13.27 15.21 L13.30 16.23 L11.90 16.23 L11.93 15.21 L11.29 14.95 L10.60 15.69 L9.61 14.70 L10.35 14.01 L10.09 13.37 L9.07 13.40 L9.07 12.00 L10.09 12.03 L10.35 11.39 L9.61 10.70 L10.60 9.71 L11.29 10.45 L11.93 10.19 L11.90 9.17 L13.30 9.17 L13.27 10.19 L13.91 10.45 L14.60 9.71 L15.59 10.70 L14.85 11.39Z" fill="#7a8ea0"/><circle cx="12.6" cy="12.7" r="2.4" fill="#bcd5e8"/><circle cx="12.6" cy="12.7" r="0.9" fill="#f4f9fc"/></svg></div>
<div class="t" style="left:356.50px;top:340.84px;font-size:12px;color:#000;letter-spacing:0.064px;">Volumetric Audio Composit...</div>
<div class="t" style="left:520.70px;top:340.84px;font-size:12px;color:#000;letter-spacing:-0.275px;">Hosts spatia...</div>
<div class="t" style="left:668.50px;top:340.84px;font-size:12px;color:#000;letter-spacing:0.007px;">Manual</div>
<div class="t" style="left:760.50px;top:340.84px;font-size:12px;color:#000;letter-spacing:-0.2px;">Loc</div>
<div class="b" style="left:338px;top:361px;width:16px;height:16px"><svg width="16" height="16" viewBox="0 0 16 16"><path d="M12.18 5.69 L13.81 5.70 L13.81 7.90 L12.18 7.91 L11.83 9.01 L13.14 9.98 L11.85 11.75 L10.52 10.81 L9.59 11.48 L10.08 13.04 L8.00 13.71 L7.48 12.17 L6.32 12.17 L5.80 13.71 L3.72 13.04 L4.21 11.48 L3.28 10.81 L1.95 11.75 L0.66 9.98 L1.97 9.01 L1.62 7.91 L-0.01 7.90 L-0.01 5.70 L1.62 5.69 L1.97 4.59 L0.66 3.62 L1.95 1.85 L3.28 2.79 L4.21 2.12 L3.72 0.56 L5.80 -0.11 L6.32 1.43 L7.48 1.43 L8.00 -0.11 L10.08 0.56 L9.59 2.12 L10.52 2.79 L11.85 1.85 L13.14 3.62 L11.83 4.59Z" fill="#8196a8" stroke="#74889a" stroke-width="0.5"/><circle cx="6.9" cy="6.8" r="5.0" fill="url(#gg)"/><circle cx="6.9" cy="6.8" r="2.8" fill="none" stroke="#50708e" stroke-width="1.3"/><circle cx="6.9" cy="6.8" r="2.0" fill="#f7fbfe"/><path d="M15.11 12.03 L16.13 12.00 L16.13 13.40 L15.11 13.37 L14.85 14.01 L15.59 14.70 L14.60 15.69 L13.91 14.95 L13.27 15.21 L13.30 16.23 L11.90 16.23 L11.93 15.21 L11.29 14.95 L10.60 15.69 L9.61 14.70 L10.35 14.01 L10.09 13.37 L9.07 13.40 L9.07 12.00 L10.09 12.03 L10.35 11.39 L9.61 10.70 L10.60 9.71 L11.29 10.45 L11.93 10.19 L11.90 9.17 L13.30 9.17 L13.27 10.19 L13.91 10.45 L14.60 9.71 L15.59 10.70 L14.85 11.39Z" fill="#7a8ea0"/><circle cx="12.6" cy="12.7" r="2.4" fill="#bcd5e8"/><circle cx="12.6" cy="12.7" r="0.9" fill="#f4f9fc"/></svg></div>
<div class="t" style="left:356.50px;top:359.84px;font-size:12px;color:#000;letter-spacing:-0.278px;">WalletService</div>
<div class="t" style="left:520.70px;top:359.84px;font-size:12px;color:#000;letter-spacing:-0.186px;">Hosts objec...</div>
<div class="t" style="left:668.50px;top:359.84px;font-size:12px;color:#000;letter-spacing:0.007px;">Manual</div>
<div class="t" style="left:760.50px;top:359.84px;font-size:12px;color:#000;letter-spacing:-0.2px;">Loc</div>
<div class="b" style="left:338px;top:380px;width:16px;height:16px"><svg width="16" height="16" viewBox="0 0 16 16"><path d="M12.18 5.69 L13.81 5.70 L13.81 7.90 L12.18 7.91 L11.83 9.01 L13.14 9.98 L11.85 11.75 L10.52 10.81 L9.59 11.48 L10.08 13.04 L8.00 13.71 L7.48 12.17 L6.32 12.17 L5.80 13.71 L3.72 13.04 L4.21 11.48 L3.28 10.81 L1.95 11.75 L0.66 9.98 L1.97 9.01 L1.62 7.91 L-0.01 7.90 L-0.01 5.70 L1.62 5.69 L1.97 4.59 L0.66 3.62 L1.95 1.85 L3.28 2.79 L4.21 2.12 L3.72 0.56 L5.80 -0.11 L6.32 1.43 L7.48 1.43 L8.00 -0.11 L10.08 0.56 L9.59 2.12 L10.52 2.79 L11.85 1.85 L13.14 3.62 L11.83 4.59Z" fill="#8196a8" stroke="#74889a" stroke-width="0.5"/><circle cx="6.9" cy="6.8" r="5.0" fill="url(#gg)"/><circle cx="6.9" cy="6.8" r="2.8" fill="none" stroke="#50708e" stroke-width="1.3"/><circle cx="6.9" cy="6.8" r="2.0" fill="#f7fbfe"/><path d="M15.11 12.03 L16.13 12.00 L16.13 13.40 L15.11 13.37 L14.85 14.01 L15.59 14.70 L14.60 15.69 L13.91 14.95 L13.27 15.21 L13.30 16.23 L11.90 16.23 L11.93 15.21 L11.29 14.95 L10.60 15.69 L9.61 14.70 L10.35 14.01 L10.09 13.37 L9.07 13.40 L9.07 12.00 L10.09 12.03 L10.35 11.39 L9.61 10.70 L10.60 9.71 L11.29 10.45 L11.93 10.19 L11.90 9.17 L13.30 9.17 L13.27 10.19 L13.91 10.45 L14.60 9.71 L15.59 10.70 L14.85 11.39Z" fill="#7a8ea0"/><circle cx="12.6" cy="12.7" r="2.4" fill="#bcd5e8"/><circle cx="12.6" cy="12.7" r="0.9" fill="#f4f9fc"/></svg></div>
<div class="t" style="left:356.50px;top:378.84px;font-size:12px;color:#000;letter-spacing:-0.539px;">WarpJITSvc</div>
<div class="t" style="left:520.70px;top:378.84px;font-size:12px;color:#000;letter-spacing:-0.467px;">Provides a JI...</div>
<div class="t" style="left:668.50px;top:378.84px;font-size:12px;color:#000;letter-spacing:-0.081px;">Manual (Trig...</div>
<div class="t" style="left:760.50px;top:378.84px;font-size:12px;color:#000;letter-spacing:-0.2px;">Loc</div>
<div class="b" style="left:338px;top:399px;width:16px;height:16px"><svg width="16" height="16" viewBox="0 0 16 16"><path d="M12.18 5.69 L13.81 5.70 L13.81 7.90 L12.18 7.91 L11.83 9.01 L13.14 9.98 L11.85 11.75 L10.52 10.81 L9.59 11.48 L10.08 13.04 L8.00 13.71 L7.48 12.17 L6.32 12.17 L5.80 13.71 L3.72 13.04 L4.21 11.48 L3.28 10.81 L1.95 11.75 L0.66 9.98 L1.97 9.01 L1.62 7.91 L-0.01 7.90 L-0.01 5.70 L1.62 5.69 L1.97 4.59 L0.66 3.62 L1.95 1.85 L3.28 2.79 L4.21 2.12 L3.72 0.56 L5.80 -0.11 L6.32 1.43 L7.48 1.43 L8.00 -0.11 L10.08 0.56 L9.59 2.12 L10.52 2.79 L11.85 1.85 L13.14 3.62 L11.83 4.59Z" fill="#8196a8" stroke="#74889a" stroke-width="0.5"/><circle cx="6.9" cy="6.8" r="5.0" fill="url(#gg)"/><circle cx="6.9" cy="6.8" r="2.8" fill="none" stroke="#50708e" stroke-width="1.3"/><circle cx="6.9" cy="6.8" r="2.0" fill="#f7fbfe"/><path d="M15.11 12.03 L16.13 12.00 L16.13 13.40 L15.11 13.37 L14.85 14.01 L15.59 14.70 L14.60 15.69 L13.91 14.95 L13.27 15.21 L13.30 16.23 L11.90 16.23 L11.93 15.21 L11.29 14.95 L10.60 15.69 L9.61 14.70 L10.35 14.01 L10.09 13.37 L9.07 13.40 L9.07 12.00 L10.09 12.03 L10.35 11.39 L9.61 10.70 L10.60 9.71 L11.29 10.45 L11.93 10.19 L11.90 9.17 L13.30 9.17 L13.27 10.19 L13.91 10.45 L14.60 9.71 L15.59 10.70 L14.85 11.39Z" fill="#7a8ea0"/><circle cx="12.6" cy="12.7" r="2.4" fill="#bcd5e8"/><circle cx="12.6" cy="12.7" r="0.9" fill="#f4f9fc"/></svg></div>
<div class="t" style="left:356.50px;top:397.84px;font-size:12px;color:#000;letter-spacing:-0.005px;">Web Account Manager</div>
<div class="t" style="left:520.70px;top:397.84px;font-size:12px;color:#000;letter-spacing:-0.341px;">This service ...</div>
<div class="t" style="left:605.60px;top:397.84px;font-size:12px;color:#000;letter-spacing:-0.115px;">Running</div>
<div class="t" style="left:668.50px;top:397.84px;font-size:12px;color:#000;letter-spacing:0.007px;">Manual</div>
<div class="t" style="left:760.50px;top:397.84px;font-size:12px;color:#000;letter-spacing:-0.2px;">Loc</div>
<div class="b" style="left:338px;top:418px;width:16px;height:16px"><svg width="16" height="16" viewBox="0 0 16 16"><path d="M12.18 5.69 L13.81 5.70 L13.81 7.90 L12.18 7.91 L11.83 9.01 L13.14 9.98 L11.85 11.75 L10.52 10.81 L9.59 11.48 L10.08 13.04 L8.00 13.71 L7.48 12.17 L6.32 12.17 L5.80 13.71 L3.72 13.04 L4.21 11.48 L3.28 10.81 L1.95 11.75 L0.66 9.98 L1.97 9.01 L1.62 7.91 L-0.01 7.90 L-0.01 5.70 L1.62 5.69 L1.97 4.59 L0.66 3.62 L1.95 1.85 L3.28 2.79 L4.21 2.12 L3.72 0.56 L5.80 -0.11 L6.32 1.43 L7.48 1.43 L8.00 -0.11 L10.08 0.56 L9.59 2.12 L10.52 2.79 L11.85 1.85 L13.14 3.62 L11.83 4.59Z" fill="#8196a8" stroke="#74889a" stroke-width="0.5"/><circle cx="6.9" cy="6.8" r="5.0" fill="url(#gg)"/><circle cx="6.9" cy="6.8" r="2.8" fill="none" stroke="#50708e" stroke-width="1.3"/><circle cx="6.9" cy="6.8" r="2.0" fill="#f7fbfe"/><path d="M15.11 12.03 L16.13 12.00 L16.13 13.40 L15.11 13.37 L14.85 14.01 L15.59 14.70 L14.60 15.69 L13.91 14.95 L13.27 15.21 L13.30 16.23 L11.90 16.23 L11.93 15.21 L11.29 14.95 L10.60 15.69 L9.61 14.70 L10.35 14.01 L10.09 13.37 L9.07 13.40 L9.07 12.00 L10.09 12.03 L10.35 11.39 L9.61 10.70 L10.60 9.71 L11.29 10.45 L11.93 10.19 L11.90 9.17 L13.30 9.17 L13.27 10.19 L13.91 10.45 L14.60 9.71 L15.59 10.70 L14.85 11.39Z" fill="#7a8ea0"/><circle cx="12.6" cy="12.7" r="2.4" fill="#bcd5e8"/><circle cx="12.6" cy="12.7" r="0.9" fill="#f4f9fc"/></svg></div>
<div class="t" style="left:356.50px;top:416.84px;font-size:12px;color:#000;letter-spacing:-0.004px;">WebClient</div>
<div class="t" style="left:520.70px;top:416.84px;font-size:12px;color:#000;letter-spacing:-0.391px;">Enables Win...</div>
<div class="t" style="left:668.50px;top:416.84px;font-size:12px;color:#000;letter-spacing:-0.081px;">Manual (Trig...</div>
<div class="t" style="left:760.50px;top:416.84px;font-size:12px;color:#000;letter-spacing:-0.2px;">Loc</div>
<div class="b" style="left:338px;top:437px;width:16px;height:16px"><svg width="16" height="16" viewBox="0 0 16 16"><path d="M12.18 5.69 L13.81 5.70 L13.81 7.90 L12.18 7.91 L11.83 9.01 L13.14 9.98 L11.85 11.75 L10.52 10.81 L9.59 11.48 L10.08 13.04 L8.00 13.71 L7.48 12.17 L6.32 12.17 L5.80 13.71 L3.72 13.04 L4.21 11.48 L3.28 10.81 L1.95 11.75 L0.66 9.98 L1.97 9.01 L1.62 7.91 L-0.01 7.90 L-0.01 5.70 L1.62 5.69 L1.97 4.59 L0.66 3.62 L1.95 1.85 L3.28 2.79 L4.21 2.12 L3.72 0.56 L5.80 -0.11 L6.32 1.43 L7.48 1.43 L8.00 -0.11 L10.08 0.56 L9.59 2.12 L10.52 2.79 L11.85 1.85 L13.14 3.62 L11.83 4.59Z" fill="#8196a8" stroke="#74889a" stroke-width="0.5"/><circle cx="6.9" cy="6.8" r="5.0" fill="url(#gg)"/><circle cx="6.9" cy="6.8" r="2.8" fill="none" stroke="#50708e" stroke-width="1.3"/><circle cx="6.9" cy="6.8" r="2.0" fill="#f7fbfe"/><path d="M15.11 12.03 L16.13 12.00 L16.13 13.40 L15.11 13.37 L14.85 14.01 L15.59 14.70 L14.60 15.69 L13.91 14.95 L13.27 15.21 L13.30 16.23 L11.90 16.23 L11.93 15.21 L11.29 14.95 L10.60 15.69 L9.61 14.70 L10.35 14.01 L10.09 13.37 L9.07 13.40 L9.07 12.00 L10.09 12.03 L10.35 11.39 L9.61 10.70 L10.60 9.71 L11.29 10.45 L11.93 10.19 L11.90 9.17 L13.30 9.17 L13.27 10.19 L13.91 10.45 L14.60 9.71 L15.59 10.70 L14.85 11.39Z" fill="#7a8ea0"/><circle cx="12.6" cy="12.7" r="2.4" fill="#bcd5e8"/><circle cx="12.6" cy="12.7" r="0.9" fill="#f4f9fc"/></svg></div>
<div class="t" style="left:356.50px;top:435.84px;font-size:12px;color:#000;letter-spacing:-0.253px;">Wi-Fi Direct Services Conne...</div>
<div class="t" style="left:520.70px;top:435.84px;font-size:12px;color:#000;letter-spacing:-0.244px;">Manages co...</div>
<div class="t" style="left:668.50px;top:435.84px;font-size:12px;color:#000;letter-spacing:-0.081px;">Manual (Trig...</div>
<div class="t" style="left:760.50px;top:435.84px;font-size:12px;color:#000;letter-spacing:-0.2px;">Loc</div>
<div class="b" style="left:338px;top:456px;width:16px;height:16px"><svg width="16" height="16" viewBox="0 0 16 16"><path d="M12.18 5.69 L13.81 5.70 L13.81 7.90 L12.18 7.91 L11.83 9.01 L13.14 9.98 L11.85 11.75 L10.52 10.81 L9.59 11.48 L10.08 13.04 L8.00 13.71 L7.48 12.17 L6.32 12.17 L5.80 13.71 L3.72 13.04 L4.21 11.48 L3.28 10.81 L1.95 11.75 L0.66 9.98 L1.97 9.01 L1.62 7.91 L-0.01 7.90 L-0.01 5.70 L1.62 5.69 L1.97 4.59 L0.66 3.62 L1.95 1.85 L3.28 2.79 L4.21 2.12 L3.72 0.56 L5.80 -0.11 L6.32 1.43 L7.48 1.43 L8.00 -0.11 L10.08 0.56 L9.59 2.12 L10.52 2.79 L11.85 1.85 L13.14 3.62 L11.83 4.59Z" fill="#8196a8" stroke="#74889a" stroke-width="0.5"/><circle cx="6.9" cy="6.8" r="5.0" fill="url(#gg)"/><circle cx="6.9" cy="6.8" r="2.8" fill="none" stroke="#50708e" stroke-width="1.3"/><circle cx="6.9" cy="6.8" r="2.0" fill="#f7fbfe"/><path d="M15.11 12.03 L16.13 12.00 L16.13 13.40 L15.11 13.37 L14.85 14.01 L15.59 14.70 L14.60 15.69 L13.91 14.95 L13.27 15.21 L13.30 16.23 L11.90 16.23 L11.93 15.21 L11.29 14.95 L10.60 15.69 L9.61 14.70 L10.35 14.01 L10.09 13.37 L9.07 13.40 L9.07 12.00 L10.09 12.03 L10.35 11.39 L9.61 10.70 L10.60 9.71 L11.29 10.45 L11.93 10.19 L11.90 9.17 L13.30 9.17 L13.27 10.19 L13.91 10.45 L14.60 9.71 L15.59 10.70 L14.85 11.39Z" fill="#7a8ea0"/><circle cx="12.6" cy="12.7" r="2.4" fill="#bcd5e8"/><circle cx="12.6" cy="12.7" r="0.9" fill="#f4f9fc"/></svg></div>
<div class="t" style="left:356.50px;top:454.84px;font-size:12px;color:#000;letter-spacing:0.050px;">Windows Audio</div>
<div class="t" style="left:520.70px;top:454.84px;font-size:12px;color:#000;letter-spacing:-0.296px;">Manages au...</div>
<div class="t" style="left:605.60px;top:454.84px;font-size:12px;color:#000;letter-spacing:-0.115px;">Running</div>
<div class="t" style="left:668.50px;top:454.84px;font-size:12px;color:#000;letter-spacing:0.227px;">Automatic</div>
<div class="t" style="left:760.50px;top:454.84px;font-size:12px;color:#000;letter-spacing:-0.2px;">Loc</div>
<div class="b" style="left:338px;top:475px;width:16px;height:16px"><svg width="16" height="16" viewBox="0 0 16 16"><path d="M12.18 5.69 L13.81 5.70 L13.81 7.90 L12.18 7.91 L11.83 9.01 L13.14 9.98 L11.85 11.75 L10.52 10.81 L9.59 11.48 L10.08 13.04 L8.00 13.71 L7.48 12.17 L6.32 12.17 L5.80 13.71 L3.72 13.04 L4.21 11.48 L3.28 10.81 L1.95 11.75 L0.66 9.98 L1.97 9.01 L1.62 7.91 L-0.01 7.90 L-0.01 5.70 L1.62 5.69 L1.97 4.59 L0.66 3.62 L1.95 1.85 L3.28 2.79 L4.21 2.12 L3.72 0.56 L5.80 -0.11 L6.32 1.43 L7.48 1.43 L8.00 -0.11 L10.08 0.56 L9.59 2.12 L10.52 2.79 L11.85 1.85 L13.14 3.62 L11.83 4.59Z" fill="#8196a8" stroke="#74889a" stroke-width="0.5"/><circle cx="6.9" cy="6.8" r="5.0" fill="url(#gg)"/><circle cx="6.9" cy="6.8" r="2.8" fill="none" stroke="#50708e" stroke-width="1.3"/><circle cx="6.9" cy="6.8" r="2.0" fill="#f7fbfe"/><path d="M15.11 12.03 L16.13 12.00 L16.13 13.40 L15.11 13.37 L14.85 14.01 L15.59 14.70 L14.60 15.69 L13.91 14.95 L13.27 15.21 L13.30 16.23 L11.90 16.23 L11.93 15.21 L11.29 14.95 L10.60 15.69 L9.61 14.70 L10.35 14.01 L10.09 13.37 L9.07 13.40 L9.07 12.00 L10.09 12.03 L10.35 11.39 L9.61 10.70 L10.60 9.71 L11.29 10.45 L11.93 10.19 L11.90 9.17 L13.30 9.17 L13.27 10.19 L13.91 10.45 L14.60 9.71 L15.59 10.70 L14.85 11.39Z" fill="#7a8ea0"/><circle cx="12.6" cy="12.7" r="2.4" fill="#bcd5e8"/><circle cx="12.6" cy="12.7" r="0.9" fill="#f4f9fc"/></svg></div>
<div class="t" style="left:356.50px;top:473.84px;font-size:12px;color:#000;letter-spacing:-0.037px;">Windows Audio Endpoint B...</div>
<div class="t" style="left:520.70px;top:473.84px;font-size:12px;color:#000;letter-spacing:-0.296px;">Manages au...</div>
<div class="t" style="left:605.60px;top:473.84px;font-size:12px;color:#000;letter-spacing:-0.115px;">Running</div>
<div class="t" style="left:668.50px;top:473.84px;font-size:12px;color:#000;letter-spacing:0.227px;">Automatic</div>
<div class="t" style="left:760.50px;top:473.84px;font-size:12px;color:#000;letter-spacing:-0.2px;">Loc</div>
<div class="b" style="left:338px;top:494px;width:16px;height:16px"><svg width="16" height="16" viewBox="0 0 16 16"><path d="M12.18 5.69 L13.81 5.70 L13.81 7.90 L12.18 7.91 L11.83 9.01 L13.14 9.98 L11.85 11.75 L10.52 10.81 L9.59 11.48 L10.08 13.04 L8.00 13.71 L7.48 12.17 L6.32 12.17 L5.80 13.71 L3.72 13.04 L4.21 11.48 L3.28 10.81 L1.95 11.75 L0.66 9.98 L1.97 9.01 L1.62 7.91 L-0.01 7.90 L-0.01 5.70 L1.62 5.69 L1.97 4.59 L0.66 3.62 L1.95 1.85 L3.28 2.79 L4.21 2.12 L3.72 0.56 L5.80 -0.11 L6.32 1.43 L7.48 1.43 L8.00 -0.11 L10.08 0.56 L9.59 2.12 L10.52 2.79 L11.85 1.85 L13.14 3.62 L11.83 4.59Z" fill="#8196a8" stroke="#74889a" stroke-width="0.5"/><circle cx="6.9" cy="6.8" r="5.0" fill="url(#gg)"/><circle cx="6.9" cy="6.8" r="2.8" fill="none" stroke="#50708e" stroke-width="1.3"/><circle cx="6.9" cy="6.8" r="2.0" fill="#f7fbfe"/><path d="M15.11 12.03 L16.13 12.00 L16.13 13.40 L15.11 13.37 L14.85 14.01 L15.59 14.70 L14.60 15.69 L13.91 14.95 L13.27 15.21 L13.30 16.23 L11.90 16.23 L11.93 15.21 L11.29 14.95 L10.60 15.69 L9.61 14.70 L10.35 14.01 L10.09 13.37 L9.07 13.40 L9.07 12.00 L10.09 12.03 L10.35 11.39 L9.61 10.70 L10.60 9.71 L11.29 10.45 L11.93 10.19 L11.90 9.17 L13.30 9.17 L13.27 10.19 L13.91 10.45 L14.60 9.71 L15.59 10.70 L14.85 11.39Z" fill="#7a8ea0"/><circle cx="12.6" cy="12.7" r="2.4" fill="#bcd5e8"/><circle cx="12.6" cy="12.7" r="0.9" fill="#f4f9fc"/></svg></div>
<div class="t" style="left:356.50px;top:492.84px;font-size:12px;color:#000;letter-spacing:-0.153px;">Windows Backup</div>
<div class="t" style="left:520.70px;top:492.84px;font-size:12px;color:#000;letter-spacing:-0.287px;">Provides Wi...</div>
<div class="t" style="left:605.60px;top:492.84px;font-size:12px;color:#000;letter-spacing:-0.115px;">Running</div>
<div class="t" style="left:668.50px;top:492.84px;font-size:12px;color:#000;letter-spacing:0.007px;">Manual</div>
<div class="t" style="left:760.50px;top:492.84px;font-size:12px;color:#000;letter-spacing:-0.2px;">Loc</div>
<div class="b" style="left:338px;top:513px;width:16px;height:16px"><svg width="16" height="16" viewBox="0 0 16 16"><path d="M12.18 5.69 L13.81 5.70 L13.81 7.90 L12.18 7.91 L11.83 9.01 L13.14 9.98 L11.85 11.75 L10.52 10.81 L9.59 11.48 L10.08 13.04 L8.00 13.71 L7.48 12.17 L6.32 12.17 L5.80 13.71 L3.72 13.04 L4.21 11.48 L3.28 10.81 L1.95 11.75 L0.66 9.98 L1.97 9.01 L1.62 7.91 L-0.01 7.90 L-0.01 5.70 L1.62 5.69 L1.97 4.59 L0.66 3.62 L1.95 1.85 L3.28 2.79 L4.21 2.12 L3.72 0.56 L5.80 -0.11 L6.32 1.43 L7.48 1.43 L8.00 -0.11 L10.08 0.56 L9.59 2.12 L10.52 2.79 L11.85 1.85 L13.14 3.62 L11.83 4.59Z" fill="#8196a8" stroke="#74889a" stroke-width="0.5"/><circle cx="6.9" cy="6.8" r="5.0" fill="url(#gg)"/><circle cx="6.9" cy="6.8" r="2.8" fill="none" stroke="#50708e" stroke-width="1.3"/><circle cx="6.9" cy="6.8" r="2.0" fill="#f7fbfe"/><path d="M15.11 12.03 L16.13 12.00 L16.13 13.40 L15.11 13.37 L14.85 14.01 L15.59 14.70 L14.60 15.69 L13.91 14.95 L13.27 15.21 L13.30 16.23 L11.90 16.23 L11.93 15.21 L11.29 14.95 L10.60 15.69 L9.61 14.70 L10.35 14.01 L10.09 13.37 L9.07 13.40 L9.07 12.00 L10.09 12.03 L10.35 11.39 L9.61 10.70 L10.60 9.71 L11.29 10.45 L11.93 10.19 L11.90 9.17 L13.30 9.17 L13.27 10.19 L13.91 10.45 L14.60 9.71 L15.59 10.70 L14.85 11.39Z" fill="#7a8ea0"/><circle cx="12.6" cy="12.7" r="2.4" fill="#bcd5e8"/><circle cx="12.6" cy="12.7" r="0.9" fill="#f4f9fc"/></svg></div>
<div class="t" style="left:356.50px;top:511.84px;font-size:12px;color:#000;letter-spacing:-0.119px;">Windows Biometric Service</div>
<div class="t" style="left:520.70px;top:511.84px;font-size:12px;color:#000;letter-spacing:-0.136px;">The Windo...</div>
<div class="t" style="left:668.50px;top:511.84px;font-size:12px;color:#000;letter-spacing:-0.081px;">Manual (Trig...</div>
<div class="t" style="left:760.50px;top:511.84px;font-size:12px;color:#000;letter-spacing:-0.2px;">Loc</div>
<div class="b" style="left:781px;top:108px;width:16px;height:422px;background:#f0f0f0"></div>
<svg class="b" style="left:784px;top:114px" width="9" height="7" viewBox="0 0 9 7"><path d="M1 5.5 L4.5 1.5 L8 5.5" fill="none" stroke="#555555" stroke-width="1.8"/></svg>
<div class="b" style="left:782px;top:420px;width:14px;height:28px;background:#cdcdcd"></div>
<svg class="b" style="left:784px;top:517px" width="9" height="7" viewBox="0 0 9 7"><path d="M1 1.5 L4.5 5.5 L8 1.5" fill="none" stroke="#555555" stroke-width="1.8"/></svg>
<div class="b" style="left:334px;top:530px;width:463px;height:16px;background:#f0f0f0"></div>
<div class="b" style="left:351px;top:531px;width:368px;height:14px;background:#cdcdcd"></div>
<svg class="b" style="left:338px;top:533px" width="7" height="9" viewBox="0 0 7 9"><path d="M5.5 1 L1.5 4.5 L5.5 8" fill="none" stroke="#555555" stroke-width="1.8"/></svg>
<svg class="b" style="left:769px;top:533px" width="7" height="9" viewBox="0 0 7 9"><path d="M1.5 1 L5.5 4.5 L1.5 8" fill="none" stroke="#555555" stroke-width="1.8"/></svg>
<div class="b" style="left:120px;top:546px;width:677px;height:2px;background:#f0f0f0"></div>
<div class="b" style="left:122px;top:546px;width:69px;height:1px;background:#d8d8d8"></div>
<div class="b" style="left:192px;top:548px;width:605px;height:1px;background:#5a5a5a"></div>
<svg class="b" style="left:118px;top:546px" width="140" height="22" viewBox="0 0 140 22">
<path d="M2.3 1.5 L10.9 20 L66.3 20 L73.3 2" fill="#fff" stroke="#8a8a8a" stroke-width="1"/>
<path d="M75 2 L72.5 11 L75.5 20 L128 20 L135.5 2" fill="#f9f9f9" stroke="#8a8a8a" stroke-width="1"/>
</svg>
<div class="t" style="left:132.60px;top:548.14px;font-size:12px;color:#000;letter-spacing:-0.451px;">Extended</div>
<div class="t" style="left:196.60px;top:548.14px;font-size:12px;color:#000;letter-spacing:-0.313px;">Standard</div>
<div class="b" style="left:0px;top:567px;width:797px;height:1px;background:#d7d7d7"></div>
<div class="b" style="left:578px;top:568px;width:1px;height:19px;background:#d7d7d7"></div>
<div class="b" style="left:711px;top:568px;width:1px;height:19px;background:#d7d7d7"></div>
<div class="b" style="left:795px;top:568px;width:1px;height:19px;background:#d7d7d7"></div>
</body></html>
